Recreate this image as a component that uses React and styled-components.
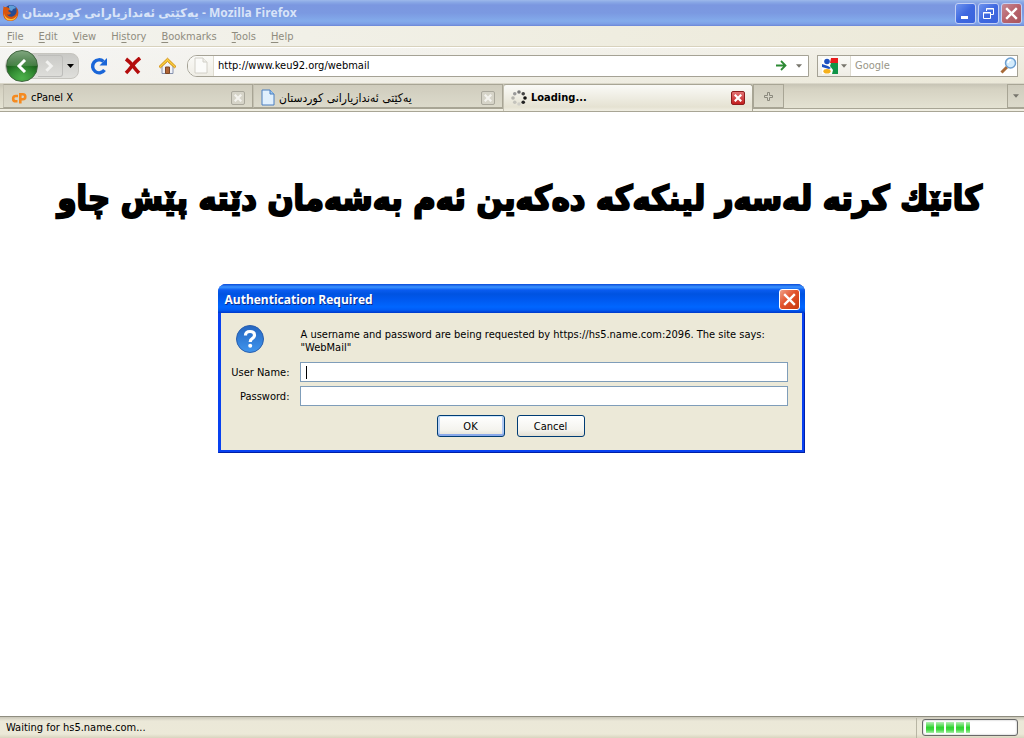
import React from "react";
import styled, { createGlobalStyle, css } from "styled-components";

const GlobalStyle = createGlobalStyle`
  *, *::before, *::after {
    box-sizing: border-box;
  }
  body {
    margin: 0;
    background: #fff;
    color: #000;
    font: 11px/13px "DejaVu Sans Condensed", "DejaVu Sans", Tahoma, sans-serif;
  }
  button, input {
    font: inherit;
    color: inherit;
    margin: 0;
    padding: 0;
    border: 0;
    background: none;
    border-radius: 0;
  }
  svg {
    display: block;
    flex: none;
  }
`;

const Browser = styled.div`
  display: flex;
  flex-direction: column;
  min-height: 100vh;
  overflow: hidden;
`;

const TitleBar = styled.header`
  display: flex;
  align-items: center;
  gap: 3px;
  height: 26px;
  padding: 0 2px;
  background: linear-gradient(
    #9db9eb 0,
    #8aa9e6 2px,
    #7b97e0 5px,
    #7b99e1 13px,
    #83abeb 21px,
    #7d9fe6 24px,
    #6b86d6 26px
  );
`;

const WindowTitle = styled.h1`
  flex: 1;
  margin: 0;
  color: #d8e4f8;
  font: bold 12px/18px "Open Sans", "DejaVu Sans", sans-serif;
  white-space: nowrap;
`;

const WindowButtons = styled.div`
  display: flex;
  gap: 2px;
`;

const WindowButton = styled.button`
  display: flex;
  align-items: center;
  justify-content: center;
  width: 21px;
  height: 21px;
  border: 1px solid ${(props) => (props.$active ? "#fff" : "#c3d0f5")};
  border-radius: 3px;
  background: ${(props) =>
    props.$active
      ? "linear-gradient(135deg, #f0a088, #e2532c 45%, #c83a10)"
      : props.$close
      ? "linear-gradient(135deg, #c58a96, #b8636c 50%, #a8545c)"
      : "linear-gradient(135deg, #6f94ee, #3e68e0 50%, #3a62dc)"};
`;

const MenuBar = styled.nav`
  display: flex;
  gap: 15px;
  height: 21px;
  padding: 4px 7px;
  border-bottom: 1px solid #d8d2bd;
  background: linear-gradient(90deg, #f3f3ee, #efede0 60%, #ece9d8);
`;

const MenuItem = styled.button`
  color: #8f8c7e;
  height: 13px;
  line-height: 13px;
  u {
    text-underline-offset: 2px;
  }
`;

const NavBar = styled.div`
  display: flex;
  align-items: center;
  height: 36px;
  padding: 0 6px 0 5px;
  border-top: 1px solid #fff;
  background: linear-gradient(90deg, rgba(246, 246, 246, 0.8), transparent),
    linear-gradient(#f1efe5, #ebe8d8);
`;

const History = styled.div`
  display: flex;
  align-items: center;
  height: 26px;
  border: 1px solid #c6c5bf;
  border-radius: 13px 8px 8px 13px;
  background: linear-gradient(#c9c9c6, #dfdfdb);
`;

const BackButton = styled.button`
  display: flex;
  align-items: center;
  justify-content: center;
  width: 32px;
  height: 32px;
  border: 1px solid #41663f;
  border-radius: 50%;
  background: radial-gradient(circle at 50% 90%, #4cb04a, transparent 60%),
    linear-gradient(#7fa67e 0, #457b44 48%, #165e18 52%, #2f8c30);
`;

const ForwardButton = styled.button`
  display: flex;
  align-items: center;
  justify-content: center;
  width: 25px;
  height: 22px;
  border: 1px solid #bdbdba;
  border-left: 0;
  border-radius: 0 3px 3px 0;
`;

const HistoryDrop = styled.button`
  display: flex;
  align-items: center;
  justify-content: center;
  width: 15px;
  height: 24px;
`;

const ToolButtons = styled.div`
  display: flex;
  gap: 14px;
  margin: 0 10px;
`;

const ToolButton = styled.button`
  display: flex;
  width: 20px;
  height: 20px;
  align-items: center;
  justify-content: center;
`;

const Field = styled.div`
  display: flex;
  align-items: center;
  height: 22px;
  border: 1px solid #a5a295;
  background: #fff;
  overflow: hidden;
`;

const AddressField = styled(Field)`
  flex: 1;
  margin-right: 8px;
  border-radius: 10px 0 0 10px;
`;

const SearchField = styled(Field)`
  width: 201px;
`;

const Identity = styled.div`
  display: flex;
  align-items: center;
  justify-content: center;
  width: 26px;
  height: 20px;
  border-right: 1px solid #dedbd0;
  background: linear-gradient(#fafaf7, #efede5);
`;

const Engine = styled(Identity)`
  width: 33px;
  gap: 3px;
`;

const FieldInput = styled.input`
  flex: 1;
  min-width: 0;
  height: 20px;
  padding: 0 4px;
  outline: 0;
  &::placeholder {
    color: #999687;
    opacity: 1;
  }
`;

const FieldButton = styled.button`
  display: flex;
  align-items: center;
  justify-content: center;
  width: 18px;
  height: 20px;
`;

const TabStrip = styled.div`
  display: flex;
  align-items: flex-end;
  height: 29px;
  padding-left: 3px;
  border-top: 1px solid #d9d6c8;
  border-bottom: 1px solid #a8a595;
  background: linear-gradient(#c7c4b5, #d5d2c2 5px, #e4e2d2 24px, #a8a595 24px, #a8a595 25px, #f0eee2 25px);
`;

const Tab = styled.div`
  display: flex;
  flex: 0 1 250px;
  min-width: 0;
  align-items: center;
  gap: 4px;
  height: 24px;
  margin-bottom: 3px;
  padding: 3px 7px 0;
  border: 1px solid #a8a595;
  border-left-color: #c3c0b1;
  background: linear-gradient(#cfccbd, #dcdacb);
  ${(props) =>
    props.$active &&
    css`
      height: 27px;
      margin-bottom: 0;
      padding-bottom: 3px;
      border-bottom: 0;
      border-radius: 3px 3px 0 0;
      background: linear-gradient(#fafaf7, #e5e2d2 22px, #f0eee2);
      font-weight: bold;
    `}
`;

const TabLabel = styled.span`
  flex: 1;
  overflow: hidden;
  white-space: nowrap;
  line-height: 18px;
  &:lang(ckb) {
    font-size: 12px;
  }
`;

const TabClose = styled.button`
  display: flex;
  align-items: center;
  justify-content: center;
  width: 14px;
  height: 14px;
  border: 1px solid ${(props) => (props.$active ? "#8d1c1c" : "#aaa89c")};
  border-radius: 2px;
  background: ${(props) =>
    props.$active ? "linear-gradient(#e27272, #c41f1f)" : "#d6d4c8"};
`;

const StripButton = styled.button`
  display: flex;
  align-items: center;
  justify-content: center;
  width: ${(props) => props.$width}px;
  height: 24px;
  margin-bottom: 3px;
  border: 1px solid #a8a595;
  background: linear-gradient(#cfccbd, #dcdacb);
  &:last-child {
    margin-left: auto;
    border-right: 0;
  }
`;

const Page = styled.main`
  flex: 1;
  padding: 61px 18px 61px 16px;
`;

const Headline = styled.h2`
  margin: 0 0 60px;
  padding-right: 24px;
  font: bold 34px/51px "DejaVu Sans Condensed", "DejaVu Sans", sans-serif;
  white-space: nowrap;
  -webkit-text-stroke: 2px #000;
`;

const Dialog = styled.section`
  width: 100%;
  max-width: 587px;
  margin: 0 auto;
  border: solid #0020a8;
  border-width: 0 1px 1px;
  border-left-color: #0841f0;
  border-radius: 8px 8px 0 0;
  background: #ece9d8;
  box-shadow: inset 0 0 0 2px #0841f0;
`;

const DialogTitle = styled.header`
  display: flex;
  align-items: center;
  justify-content: space-between;
  height: 29px;
  margin: 0 -1px;
  padding: 2px 5px 0 7px;
  border-radius: 8px 8px 0 0;
  background: linear-gradient(
    #0a4bd8 0,
    #3a93ff 3px,
    #0a5cf0 6px,
    #0053e1 10px,
    #0058ee 15px,
    #0066ff 23px,
    #005bf5 26px,
    #0038c8 29px
  );
  h2 {
    margin: 0;
    color: #fff;
    font: bold 12px/18px "Open Sans", sans-serif;
    text-shadow: 1px 1px 0 #0a2a8a;
  }
`;

const DialogForm = styled.form`
  display: grid;
  grid-template-columns: 69px 1fr;
  column-gap: 10px;
  row-gap: 4px;
  align-items: center;
  padding: 11px 16px 15px 2px;
`;

const QuestionCell = styled.div`
  align-self: start;
  padding-left: 14px;
`;

const Message = styled.p`
  margin: 0;
  padding: 4px 0 4px 1px;
`;

const Label = styled.label`
  text-align: right;
`;

const TextBox = styled.input`
  width: 100%;
  height: 20px;
  padding: 0 5px;
  border: 1px solid #7f9db9;
  background-color: #fff;
  outline: 0;
  ${(props) =>
    props.$focused &&
    css`
      background-image: linear-gradient(#000, #000);
      background-repeat: no-repeat;
      background-size: 1px 13px;
      background-position: 5px 3px;
    `}
`;

const DialogButtons = styled.div`
  grid-column: 1 / -1;
  display: flex;
  justify-content: center;
  gap: 12px;
  padding: 5px 0 0 13px;
`;

const DialogButton = styled.button`
  width: 68px;
  height: 22px;
  border: 1px solid #003c74;
  border-radius: 3px;
  background: linear-gradient(#fff, #f4f3ee 70%, #e2dfd3);
  box-shadow: ${(props) =>
    props.$default
      ? "inset 0 1px #cee7ff, inset 0 -2px #8aa9ea, inset 2px 0 #bcd4f6, inset -2px 0 #b0c9f4"
      : "none"};
`;

const StatusBar = styled.footer`
  display: flex;
  align-items: center;
  justify-content: space-between;
  height: 22px;
  padding: 0 6px;
  border-top: 1px solid #8f8d80;
  background: linear-gradient(#c9c6b8, #ebe8d8 4px, #ece9d8 17px, #d9d5bf);
`;

const ProgressPanel = styled.div`
  display: flex;
  align-items: center;
  height: 20px;
  padding-left: 5px;
  border-left: 1px solid #b8b5a4;
`;

const Progress = styled.div`
  display: flex;
  gap: 2px;
  width: 96px;
  height: 17px;
  padding: 2px 3px;
  border: 1px solid #686868;
  border-radius: 3px;
  background: #fff;
  box-shadow: inset 0 0 2px #aaa;
`;

const Chunk = styled.span`
  width: ${(props) => props.$width}px;
  height: 11px;
  background: linear-gradient(#b5efb5, #32d432 50%, #3fd83f 70%, #a8eda8);
`;

const Arrow = ({ color = "#77756c", size = 5 }) => (
  <svg width={size + 2} height="4" viewBox="0 0 7 4" aria-hidden="true">
    <path d="M0 0h7L3.5 4z" fill={color} />
  </svg>
);

const Cross = ({ size = 11, color = "#fff", width = 2 }) => (
  <svg width={size} height={size} viewBox="0 0 11 11" aria-hidden="true">
    <path d="M1 1l9 9M10 1l-9 9" stroke={color} strokeWidth={width} />
  </svg>
);

const FirefoxLogo = () => (
  <svg width="17" height="18" viewBox="0 0 17 18" aria-hidden="true">
    <circle cx="9" cy="8" r="7" fill="#274b91" />
    <path d="M7 2c3-1 6 0 7 2l-3 1-1 2-3-1z" fill="#5f9ed8" />
    <path
      d="M1 2c1 1 2 1 3 1 2 0 3 1 4 2l-2 2 3 2c-1 2-3 2-4 1 1 3 5 4 8 1 2-2 2-5 1-8 2 2 3 5 2 8-1 4-4 6-8 6-4 0-7-3-7-8 0-3 0-5 1-7z"
      fill="#d9560e"
    />
    <path
      d="M2 8c0 4 3 7 7 7 3 0 5-2 6-4-1 4-3 5.500-7 5.500-4 0-6-3-6-8.500z"
      fill="#f9c13a"
    />
  </svg>
);

const Sheet = ({ faded }) => (
  <svg width="14" height="17" viewBox="0 0 14 17" aria-hidden="true">
    <path
      d="M1 1h8l4 4v11H1z"
      fill={faded ? "#fbfbf9" : "#e1f0fd"}
      stroke={faded ? "#d2d0c8" : "#4a7fc0"}
    />
    <path
      d="M9 1v4h4"
      fill={faded ? "#f0efea" : "#9cc7f0"}
      stroke={faded ? "#d2d0c8" : "#4a7fc0"}
    />
  </svg>
);

const Reload = () => (
  <svg width="18" height="18" viewBox="0 0 18 18" aria-hidden="true">
    <path
      d="M14.500 13A6.500 6.500 0 1 1 13.500 4.500"
      fill="none"
      stroke="#1a66d8"
      strokeWidth="3.400"
    />
    <path d="M17 1v7.500H9.500z" fill="#1a66d8" />
  </svg>
);

const Stop = () => (
  <svg width="18" height="18" viewBox="0 0 18 18" aria-hidden="true">
    <path
      d="M2 2q4 3 7 7t6 7M16 1Q11 5 8 9t-6 7"
      fill="none"
      stroke="#b40c0c"
      strokeWidth="3.600"
    />
  </svg>
);

const Home = () => (
  <svg width="19" height="18" viewBox="0 0 19 18" aria-hidden="true">
    <path d="M4 9v7.500h11V9L9.500 4z" fill="#f0f2f8" stroke="#8792ad" />
    <path d="M7.500 10h4v6.500h-4z" fill="#b06434" stroke="#7c4826" />
    <path
      d="M1 9.500L9.500 1.200 18 9.500l-1.500 1.300-7-6.500-7 6.500z"
      fill="#fbd03c"
      stroke="#d28e10"
    />
  </svg>
);

const Go = () => (
  <svg width="11" height="11" viewBox="0 0 11 11" aria-hidden="true">
    <path
      d="M0 5.500h9M5 1l4.500 4.500L5 10"
      fill="none"
      stroke="#2c8a34"
      strokeWidth="1.800"
    />
  </svg>
);

const GoogleLogo = () => (
  <svg width="16" height="16" viewBox="0 0 16 16" aria-hidden="true">
    <path d="M0 0h16v16H0z" fill="#fff" />
    <path d="M9 0h7v5H8z" fill="#e81c1c" />
    <path d="M9 5h7v11h-6l1-4-3-4z" fill="#0f9447" />
    <circle cx="5" cy="3.500" r="2.800" fill="#1c50c0" />
    <path d="M0 6l6 2 3 2-2 1-7-2z" fill="#1c50c0" />
    <ellipse cx="5" cy="13.300" rx="3.600" ry="2.300" fill="#f5b01c" />
  </svg>
);

const Magnifier = () => (
  <svg width="17" height="17" viewBox="0 0 17 17" aria-hidden="true">
    <path d="M1.500 15.500L7 10" stroke="#a86a38" strokeWidth="3" />
    <circle cx="10.500" cy="6" r="5" fill="#d3ecfd" stroke="#6d9fd0" strokeWidth="1.500" />
    <path d="M8 6q0-3 3-3" fill="none" stroke="#fff" strokeWidth="1.500" />
  </svg>
);

const CPanelLogo = () => (
  <svg width="16" height="14" viewBox="0 0 16 14" aria-hidden="true">
    <g fill="none" stroke="#f58a1f" strokeWidth="2.600">
      <path d="M7 5H4.800a2.600 2.600 0 0 0 0 5.300H6.500" />
      <path d="M9.300 12.500V3.300h2.500a2.500 2.500 0 0 1 0 5H10" />
    </g>
  </svg>
);

const SPOKES = ["#777", "#444", "#111", "#222", "#d0cfc8", "#c4c3bc", "#b4b3ad", "#999"];

const Spinner = () => (
  <svg width="16" height="16" viewBox="0 0 16 16" aria-hidden="true">
    {SPOKES.map((color, index) => {
      const angle = ((index * 45 - 90) * Math.PI) / 180;
      return (
        <circle
          key={index}
          cx={8 + 6 * Math.cos(angle)}
          cy={8 + 6 * Math.sin(angle)}
          r="1.800"
          fill={color}
        />
      );
    })}
  </svg>
);

const Question = () => (
  <svg width="30" height="30" viewBox="0 0 30 30" role="img" aria-label="Question">
    <defs>
      <linearGradient id="ball" x2="0" y2="1">
        <stop offset="0" stopColor="#2465c0" />
        <stop offset="1" stopColor="#3f95ee" />
      </linearGradient>
    </defs>
    <circle cx="15" cy="15" r="13.500" fill="url(#ball)" stroke="#2a5fae" />
    <path
      d="M10.500 11.500q0-4 4.500-4t4.500 3.800q0 2-2.300 3.400-2 1.200-2 3.300"
      fill="none"
      stroke="#fff"
      strokeWidth="3.200"
    />
    <circle cx="15.200" cy="21.800" r="2" fill="#fff" />
  </svg>
);

const MENUS = [
  ["", "F", "ile"],
  ["", "E", "dit"],
  ["", "V", "iew"],
  ["Hi", "s", "tory"],
  ["", "B", "ookmarks"],
  ["", "T", "ools"],
  ["", "H", "elp"],
];

const TABS = [
  { icon: <CPanelLogo />, label: "cPanel X" },
  { icon: <Sheet />, label: "یەكێتی ئەندازیارانی كوردستان", lang: "ckb" },
  { icon: <Spinner />, label: "Loading...", active: true },
];

const CHUNKS = [8, 8, 8, 8, 4];

const AuthDialog = () => (
  <Dialog role="dialog" aria-labelledby="auth-title">
    <DialogTitle>
      <h2 id="auth-title">Authentication Required</h2>
      <WindowButton $active aria-label="Close dialog">
        <Cross size={13} />
      </WindowButton>
    </DialogTitle>
    <DialogForm onSubmit={(event) => event.preventDefault()}>
      <QuestionCell>
        <Question />
      </QuestionCell>
      <Message>
        A username and password are being requested by
        https://hs5.name.com:2096. The site says: "WebMail"
      </Message>
      <Label htmlFor="username">User Name:</Label>
      <TextBox id="username" type="text" $focused />
      <Label htmlFor="password">Password:</Label>
      <TextBox id="password" type="password" />
      <DialogButtons>
        <DialogButton type="submit" $default>
          OK
        </DialogButton>
        <DialogButton type="button">Cancel</DialogButton>
      </DialogButtons>
    </DialogForm>
  </Dialog>
);

const App = () => (
  <Browser>
    <GlobalStyle />
    <TitleBar>
      <FirefoxLogo />
      <WindowTitle>یەكێتی ئەندازیارانی كوردستان - Mozilla Firefox</WindowTitle>
      <WindowButtons>
        <WindowButton aria-label="Minimize">
          <svg width="13" height="13" viewBox="0 0 13 13">
            <path d="M2 9h7v3H2z" fill="#fff" />
          </svg>
        </WindowButton>
        <WindowButton aria-label="Restore">
          <svg width="13" height="13" viewBox="0 0 13 13" fill="none" stroke="#fff">
            <path d="M4.500 4V1.500h7v6H9M4 2h8" />
            <path d="M1.500 5.500h7v6h-7zM1 6h8" />
          </svg>
        </WindowButton>
        <WindowButton $close aria-label="Close">
          <Cross size={13} />
        </WindowButton>
      </WindowButtons>
    </TitleBar>
    <MenuBar>
      {MENUS.map(([before, key, after]) => (
        <MenuItem key={before + key + after}>
          {before}
          <u>{key}</u>
          {after}
        </MenuItem>
      ))}
    </MenuBar>
    <NavBar>
      <History>
        <BackButton aria-label="Back">
          <svg width="14" height="14" viewBox="0 0 14 14">
            <path d="M10 1L4 7l6 6" fill="none" stroke="#fff" strokeWidth="3" />
          </svg>
        </BackButton>
        <ForwardButton aria-label="Forward">
          <svg width="12" height="12" viewBox="0 0 10 10">
            <path d="M2 1l4 4-4 4" fill="none" stroke="#f2f2f0" strokeWidth="2.500" />
          </svg>
        </ForwardButton>
        <HistoryDrop aria-label="Recent pages">
          <Arrow color="#000" />
        </HistoryDrop>
      </History>
      <ToolButtons>
        <ToolButton aria-label="Reload">
          <Reload />
        </ToolButton>
        <ToolButton aria-label="Stop">
          <Stop />
        </ToolButton>
        <ToolButton aria-label="Home">
          <Home />
        </ToolButton>
      </ToolButtons>
      <AddressField>
        <Identity>
          <Sheet faded />
        </Identity>
        <FieldInput aria-label="Address" defaultValue="http://www.keu92.org/webmail" />
        <FieldButton aria-label="Go">
          <Go />
        </FieldButton>
        <FieldButton aria-label="Show history">
          <Arrow size={4} />
        </FieldButton>
      </AddressField>
      <SearchField>
        <Engine>
          <GoogleLogo />
          <Arrow size={4} />
        </Engine>
        <FieldInput aria-label="Search" placeholder="Google" />
        <FieldButton aria-label="Search the web">
          <Magnifier />
        </FieldButton>
      </SearchField>
    </NavBar>
    <TabStrip>
      {TABS.map(({ icon, label, lang, active }) => (
        <Tab key={label} $active={active}>
          {icon}
          <TabLabel lang={lang}>{label}</TabLabel>
          <TabClose $active={active} aria-label="Close tab">
            <Cross size={8} color={active ? "#fff" : "#f4f3ee"} width={3} />
          </TabClose>
        </Tab>
      ))}
      <StripButton $width={31} aria-label="New tab">
        <svg width="9" height="9" viewBox="0 0 9 9">
          <path d="M3.500 .5h2v3h3v2h-3v3h-2v-3h-3v-2h3z" fill="#d8d6c9" stroke="#8b897d" />
        </svg>
      </StripButton>
      <StripButton $width={17} aria-label="List all tabs">
        <Arrow size={4} />
      </StripButton>
    </TabStrip>
    <Page>
      <Headline dir="rtl" lang="ckb">
        كاتێك كرتە لەسەر لینكەكە دەكەین ئەم بەشەمان دێتە پێش چاو
      </Headline>
      <AuthDialog />
    </Page>
    <StatusBar>
      <span>Waiting for hs5.name.com...</span>
      <ProgressPanel>
        <Progress role="progressbar" aria-label="Loading page" aria-valuenow={45}>
          {CHUNKS.map((width, index) => (
            <Chunk key={index} $width={width} />
          ))}
        </Progress>
      </ProgressPanel>
    </StatusBar>
  </Browser>
);

export default App;
